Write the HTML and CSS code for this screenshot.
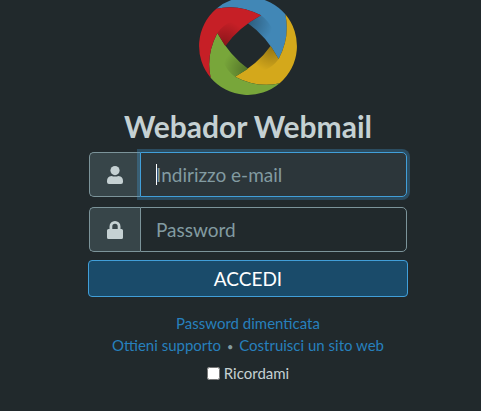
FILE: index.html
```
<!DOCTYPE html>
<html lang="it">
<head>
    <meta charset="UTF-8">
    <meta name="viewport" content="width=device-width, initial-scale=1.0">
    <title>Webador Webmail</title>
    <link rel="stylesheet" href="styles.css">
</head>
<body>
    <main class="login">
        <svg class="logo" viewBox="27 0 294 285" role="img" aria-label="Webador">
            <defs>
                <radialGradient id="shade" gradientUnits="userSpaceOnUse" cx="178" cy="66" r="72">
                    <stop offset="0" stop-color="#000" stop-opacity="0.3"/>
                    <stop offset="1" stop-color="#000" stop-opacity="0"/>
                </radialGradient>
                <g id="blade">
                    <path d="M79 26A147 147 0 0 1 286 43Q301 110 266 177Q228 108 174 70L213 46Q146 11 79 26Z"/>
                    <path d="M213 46Q262 80 266 177Q228 108 174 70Z" fill="url(#shade)"/>
                </g>
            </defs>
            <use href="#blade" fill="#4187b6"/>
            <use href="#blade" fill="#d4a81b" transform="rotate(90 174 138)"/>
            <use href="#blade" fill="#78a63a" transform="rotate(180 174 138)"/>
            <use href="#blade" fill="#c61f26" transform="rotate(270 174 138)"/>
        </svg>

        <h1>Webador Webmail</h1>

        <form>
            <div class="input-group">
                <label class="input-icon" for="email" aria-label="Indirizzo e-mail">
                    <svg viewBox="0 0 16 18">
                        <circle cx="8" cy="4.600" r="4.6"/>
                        <path d="M4.5 10Q8 11 11.5 10Q16 10.5 16 15V16Q16 18 14 18H2Q0 18 0 16V15Q0 10.5 4.5 10Z"/>
                    </svg>
                </label>
                <input type="email" id="email" placeholder="Indirizzo e-mail" autofocus>
            </div>
            <div class="input-group">
                <label class="input-icon" for="password" aria-label="Password">
                    <svg viewBox="0 0 16 18">
                        <path fill-rule="evenodd" d="M2.5 8V5.5A5.5 5.5 0 0 1 13.5 5.5V8H14.5Q16 8 16 9.5V16.5Q16 18 14.5 18H1.5Q0 18 0 16.5V9.5Q0 8 1.5 8ZM5.3 8H10.7V5.5A2.7 2.7 0 0 0 5.3 5.5Z"/>
                    </svg>
                </label>
                <input type="password" id="password" placeholder="Password">
            </div>
            <button type="submit">ACCEDI</button>

            <nav class="links">
                <a href="#">Password dimenticata</a>
                <div>
                    <a href="#">Ottieni supporto</a>
                    <span class="dot">•</span>
                    <a href="#">Costruisci un sito web</a>
                </div>
            </nav>

            <label class="remember">
                <input type="checkbox">
                Ricordami
            </label>
        </form>
    </main>
</body>
</html>
```
FILE: styles.css
```
* {
    box-sizing: border-box;
}
body {
    margin: 0;
    padding-left: 15px;
    background-color: #21292c;
    color: #c5d1d3;
    font-family: Lato, "Liberation Sans", sans-serif;
    font-size: 15px;
    line-height: 22px;
}
.login {
    width: 100%;
    max-width: 320px;
    margin: 0 auto;
    text-align: center;
}
.logo {
    display: block;
    width: 98px;
    height: 95px;
    margin: 0 auto;
}
h1 {
    margin: 13px 0 8px;
    font-size: 30px;
    line-height: 36px;
    font-weight: bold;
    white-space: nowrap;
}
.input-group {
    display: flex;
    height: 45px;
    margin: 0 1px 10px;
}
.input-icon {
    display: flex;
    align-items: center;
    justify-content: center;
    width: 51px;
    border: 1px solid #7c949a;
    border-right: none;
    border-radius: 5px 0 0 5px;
    background-color: #374549;
}
.input-icon svg {
    width: 16px;
    height: 18px;
    fill: #c5d1d3;
}
.input-group input {
    flex: 1;
    min-width: 0;
    padding: 0 15px;
    border: 1px solid #7c949a;
    border-radius: 0 5px 5px 0;
    outline: none;
    background-color: #21292c;
    color: #c5d1d3;
    font-family: inherit;
    font-size: 19px;
}
.input-group input::placeholder {
    color: #829ba1;
    opacity: 1;
}
.input-group input:focus {
    border-color: #419fd9;
    background-color: #2c363a;
    box-shadow: 0 0 0 3px rgba(65, 159, 217, 0.3);
}
/* steady cursor while the field is empty */
.input-group input:focus:placeholder-shown {
    background-image: linear-gradient(#fff, #fff);
    background-repeat: no-repeat;
    background-position: 15px center;
    background-size: 1px 21px;
    caret-color: transparent;
}
button {
    display: block;
    width: 100%;
    height: 37px;
    margin-top: -2px;
    border: 1px solid #419fd9;
    border-radius: 4px;
    background-color: #1a4b6a;
    color: #fff;
    font-family: inherit;
    font-size: 19px;
    cursor: pointer;
}
.links {
    margin-top: 15px;
}
.links a {
    color: #2780bd;
    text-decoration: none;
}
.links a:hover {
    text-decoration: underline;
}
.dot {
    margin: 0 2px;
    color: #829ba1;
    font-size: 11px;
}
.remember {
    display: flex;
    align-items: center;
    justify-content: center;
    gap: 4px;
    margin-top: 4px;
}
.remember input {
    width: 13px;
    height: 13px;
    margin: 0;
}
```
